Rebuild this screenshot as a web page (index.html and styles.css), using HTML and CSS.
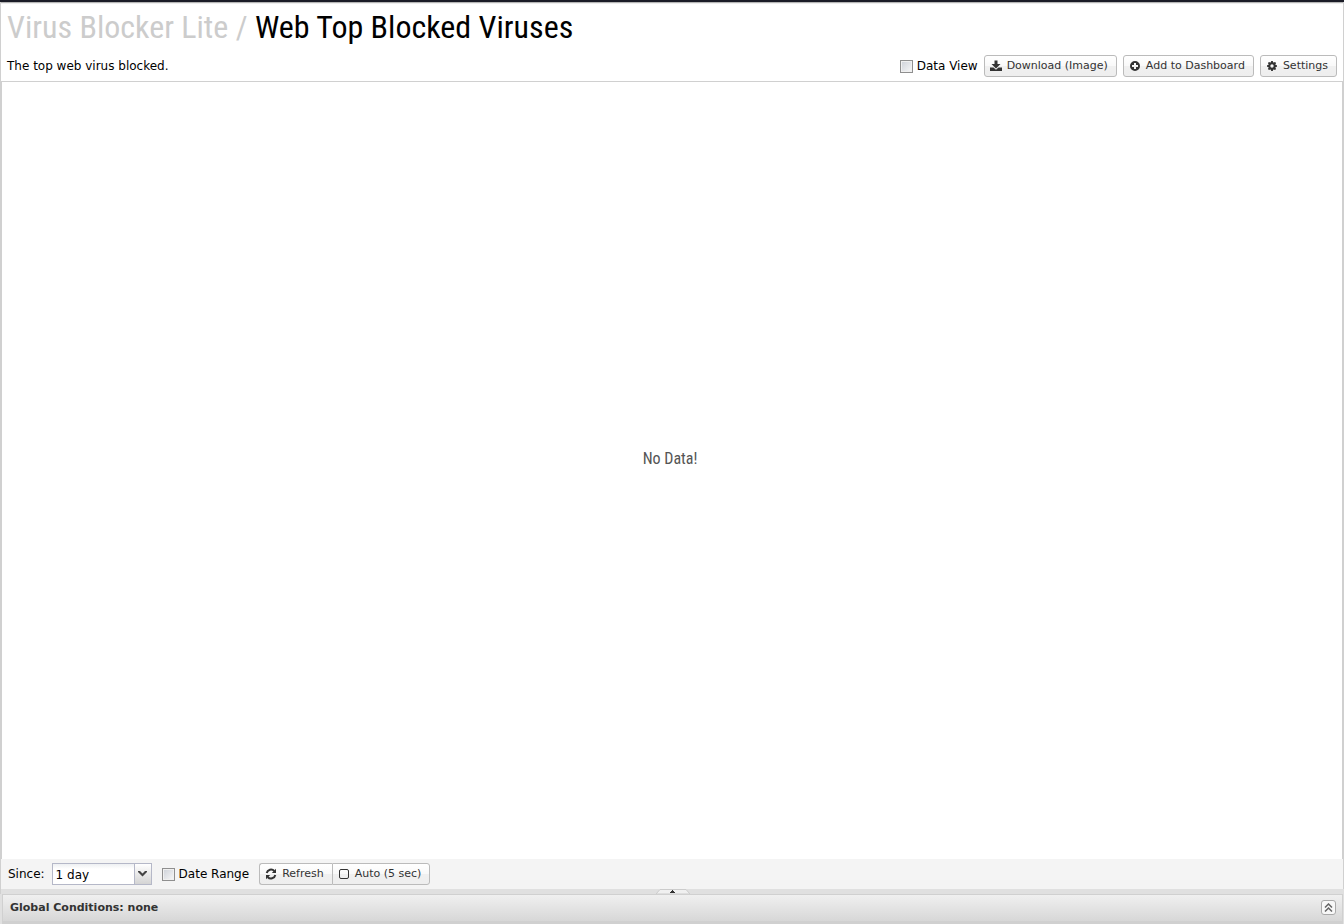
FILE: index.html
```html
<!DOCTYPE html>
<html lang="en">
<head>
  <meta charset="UTF-8" />
  <meta name="viewport" content="width=device-width, initial-scale=1.0"/>
  <title>Web Top Blocked Viruses</title>
  <link rel="stylesheet" href="styles.css">
</head>
<body>
  <main class="report">
    <header class="report-header">
      <h1><span class="category">Virus Blocker Lite /</span> Web Top Blocked Viruses</h1>
      <div class="header-row">
        <p class="description">The top web virus blocked.</p>
        <div class="actions">
          <label class="check" for="dataView"><input type="checkbox" id="dataView"> Data View</label>
          <button type="button" class="btn">
            <svg class="icon" viewBox="0 0 12 12"><path d="M4.500 .5h3v3.500h3L6 8.500 1.500 4h3z"/><path d="M0 7.500h3.500L6 9.800l2.500-2.300H12V11H0z"/></svg>
            Download (Image)
          </button>
          <button type="button" class="btn">
            <svg class="icon" viewBox="0 0 12 12"><path fill-rule="evenodd" d="M6 1a5 5 0 1 0 0 10A5 5 0 0 0 6 1zM5 3h2v2h2v2H7v2H5V7H3V5h2z"/></svg>
            Add to Dashboard
          </button>
          <button type="button" class="btn">
            <svg class="icon" viewBox="0 0 12 12"><path fill-rule="evenodd" d="M5.200 1h1.600l.3 1.300.7.3 1.200-.7 1.100 1.100-.7 1.200.3.700 1.300.3v1.600l-1.300.3-.3.700.7 1.200L9 10.100l-1.200-.7-.7.3L6.800 11H5.200l-.3-1.300-.7-.3-1.200.7L1.900 9l.7-1.200-.3-.7L1 6.800V5.200l1.300-.3.3-.7L1.900 3 3 1.900l1.200.7.7-.3zM6 4.300a1.700 1.700 0 1 0 0 3.400 1.700 1.700 0 0 0 0-3.400z"/></svg>
            Settings
          </button>
        </div>
      </div>
    </header>

    <section class="chart">
      <p class="no-data">No Data!</p>
    </section>

    <footer class="toolbar">
      <label for="since">Since:</label>
      <div class="select-box">
        <select id="since">
          <option>1 day</option>
        </select>
        <span class="trigger">
          <svg viewBox="0 0 9 6"><path d="M0 0h2l2.500 2.500L7 0h2v1L4.500 5.500 0 1z"/></svg>
        </span>
      </div>
      <label class="check" for="dateRange"><input type="checkbox" id="dateRange"> Date Range</label>
      <div class="btn-group">
        <button type="button" class="btn">
          <svg class="icon stroke" viewBox="0 0 12 12"><path d="M1.700 5a4.400 4.400 0 0 1 7.600-2M10.300 7a4.400 4.400 0 0 1-7.600 2"/><path class="fill" d="M11 .8V5H6.800zM1 11.200V7h4.200z"/></svg>
          Refresh
        </button>
        <button type="button" class="btn">
          <svg class="icon square" viewBox="0 0 12 12"><rect x="1.500" y="1.500" width="9" height="9" rx="1.500"/></svg>
          Auto (5 sec)
        </button>
      </div>
    </footer>
  </main>

  <div class="splitter">
    <svg viewBox="0 0 34 5"><path class="tab" d="M0 5L4 .5h26L34 5z"/><path class="arrow" d="M14 4V3h1V2h1V1h1v1h1v1h1v1z"/></svg>
  </div>

  <section class="conditions">
    <h2>Global Conditions: none</h2>
    <button type="button" class="expand" aria-label="Expand">
      <svg viewBox="0 0 9 9"><path d="M1 4.500L4.500 1 8 4.500M1 8.500L4.500 5 8 8.500"/></svg>
    </button>
  </section>
</body>
</html>
```

FILE: styles.css
```css
* {
  box-sizing: border-box;
}

body {
  margin: 0;
  min-height: 100vh;
  display: flex;
  flex-direction: column;
  background: #e0e0e0;
  border-top: 2px solid #1b1c27;
  font-family: "DejaVu Sans", sans-serif;
  font-size: 12px;
  color: #000;
}

h1, h2, p {
  margin: 0;
}

.report {
  flex: 1;
  display: flex;
  flex-direction: column;
  background: #fff;
  border-left: 1px solid #d0d0d0;
  border-right: 1px solid #d0d0d0;
}

.report-header {
  padding: 5px 6px 4px;
  border-bottom: 1px solid #d0d0d0;
  box-shadow: inset 0 1px #b5b5b5, inset 0 2px #eee;
}

h1 {
  font-family: "Roboto Condensed", "Liberation Sans Narrow", sans-serif;
  font-size: 32px;
  line-height: 40px;
  font-weight: 400;
}

.category {
  color: #ccc;
}

.header-row {
  display: flex;
  justify-content: space-between;
  align-items: center;
  margin-top: 8px;
}

.actions {
  display: flex;
  align-items: center;
  gap: 6px;
}

.check {
  display: flex;
  align-items: center;
  gap: 4px;
}

.check input {
  appearance: none;
  width: 13px;
  height: 13px;
  margin: 0;
  border: 1px solid #8f8f8f;
  background: linear-gradient(135deg, #cdd1d8, #f8f8f8);
  box-shadow: inset 0 0 0 1px #f0f0f0;
}

.btn {
  display: flex;
  align-items: center;
  gap: 5px;
  height: 22px;
  padding: 0 8px 1px 5px;
  border: 1px solid #bbb;
  border-radius: 3px;
  background: linear-gradient(#fff, #f9f9f9 48%, #f0f0f0 52%, #eee);
  font-family: inherit;
  font-size: 11px;
  color: #333;
}

.icon {
  width: 12px;
  height: 12px;
  fill: #333;
}

.icon.square,
.icon.stroke {
  fill: none;
  stroke: #333;
}

.icon.stroke {
  stroke-width: 2;
}

.icon .fill {
  fill: #333;
  stroke: none;
}

.chart {
  flex: 1;
  display: flex;
  align-items: center;
  justify-content: center;
  border: 0 solid #d0d0d0;
  border-width: 0 1px;
}

.no-data {
  padding: 0 4px 24px 0;
  font-family: "Roboto Condensed", "Liberation Sans Narrow", sans-serif;
  font-size: 16px;
  color: #555;
}

.toolbar {
  display: flex;
  align-items: center;
  height: 30px;
  padding: 0 7px;
  background: #f4f4f4;
}

.select-box {
  display: flex;
  position: relative;
  width: 100px;
  height: 22px;
  margin: 0 10px 0 7px;
}

.select-box select {
  appearance: none;
  width: 100%;
  padding: 1px 20px 0 3px;
  border: 1px solid #b5b8c8;
  border-radius: 0;
  background: linear-gradient(#eef0f2, #fff 5px);
  font-family: inherit;
  font-size: 12px;
}

.trigger {
  position: absolute;
  top: 1px;
  right: 1px;
  bottom: 1px;
  width: 17px;
  display: flex;
  align-items: center;
  justify-content: center;
  border-left: 1px solid #b5b8c8;
  background: linear-gradient(#fff, #d4d4d4);
  pointer-events: none;
}

.trigger svg {
  width: 9px;
  height: 6px;
  fill: #444;
}

.btn-group {
  display: flex;
  margin-left: 10px;
}

.btn-group .btn:first-child {
  border-right: 0;
  border-radius: 3px 0 0 3px;
}

.btn-group .btn:last-child {
  border-radius: 0 3px 3px 0;
}

.splitter {
  display: flex;
  justify-content: center;
  height: 5px;
  border-left: 1px solid #d0d0d0;
}

.splitter svg {
  width: 34px;
  height: 5px;
}

.splitter .tab {
  fill: #f0f0f0;
  stroke: #ccc;
}

.splitter .arrow {
  fill: #333;
}

.conditions {
  display: flex;
  justify-content: space-between;
  align-items: center;
  height: 30px;
  margin: 0 1px 0 2px;
  padding: 0 6px 1px 7px;
  border: 1px solid #d0d0d0;
  border-bottom: 3px solid #d0d0d0;
  background: linear-gradient(#f0f0f0, #d7d7d7);
}

.conditions h2 {
  font-size: 11px;
  color: #333;
}

.expand {
  display: flex;
  align-items: center;
  justify-content: center;
  width: 15px;
  height: 15px;
  padding: 0;
  border: 1px solid #aaa;
  border-radius: 3px;
  background: #f8f8f8;
}

.expand svg {
  width: 9px;
  height: 9px;
  fill: none;
  stroke: #666;
  stroke-width: 1.500;
}
```
